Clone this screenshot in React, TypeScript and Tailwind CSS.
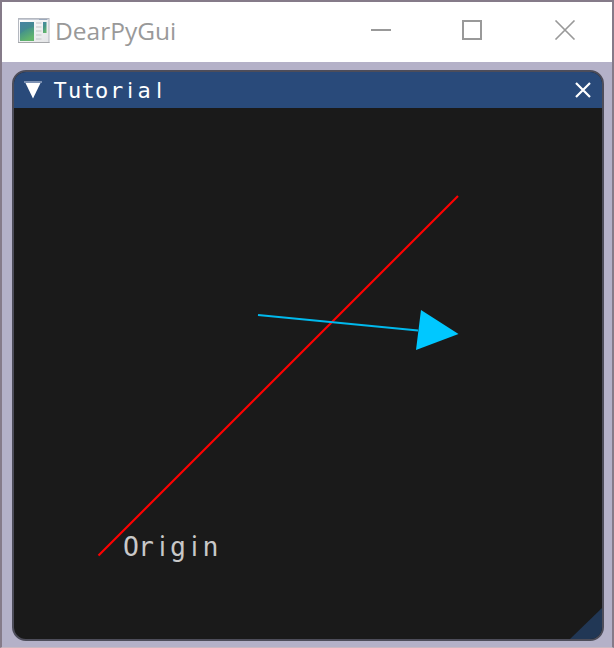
import React from "react";

function AppIcon() {
  return (
    <svg className="-mt-px h-[27px] w-[32px] shrink-0" viewBox="0 0 32 27">
      <defs>
        <linearGradient id="pane" x1="0" y1="0" x2="0.4" y2="1">
          <stop offset="0" stopColor="#4a88a5" />
          <stop offset="0.5" stopColor="#459489" />
          <stop offset="1" stopColor="#63b56c" />
        </linearGradient>
        <linearGradient id="face" x1="0" y1="0" x2="1" y2="1">
          <stop offset="0" stopColor="#ffffff" />
          <stop offset="1" stopColor="#e3e4e6" />
        </linearGradient>
      </defs>
      <rect x="0.5" y="0.5" width="30.500" height="24" fill="url(#face)" stroke="#b4b8c0" />
      <path d="M0 24.5H31.500" stroke="#a5a7aa" />
      <path d="M1 1.500H30" stroke="#c7cbd5" />
      <path d="M21 1.500H29" stroke="#9ca9bc" />
      <rect x="2" y="4" width="14" height="19" fill="url(#pane)" />
      <path d="M2 16Q7 10 16 9V4H2Z" fill="#4179a0" opacity="0.35" />
      <path d="M18 5H23.500M18 9H23.500M18 13H23.500M18 17H23.500M18 21H23.500" stroke="#d2d3d5" strokeWidth="1.5" />
      <rect x="25" y="4" width="3.500" height="11" fill="url(#pane)" />
    </svg>
  );
}

type Glyph = { c: string; x: number; plain?: boolean };

const titleGlyphs: Glyph[] = [
  { c: "T", x: 7 },
  { c: "u", x: 21.5 },
  { c: "t", x: 35 },
  { c: "o", x: 48.5 },
  { c: "r", x: 63.5 },
  { c: "i", x: 77, plain: true },
  { c: "a", x: 91 },
  { c: "l", x: 106, plain: true },
];

const originGlyphs: Glyph[] = [
  { c: "O", x: 131 },
  { c: "r", x: 146 },
  { c: "i", x: 162.5, plain: true },
  { c: "g", x: 178 },
  { c: "i", x: 194.5, plain: true },
  { c: "n", x: 210.5 },
];

function GridText({ glyphs, y, size, fill }: { glyphs: Glyph[]; y: number; size: number; fill: string }) {
  return (
    <text y={y} fontSize={size} fill={fill} textAnchor="middle">
      {glyphs.map((g) => (
        <tspan
          key={g.x}
          x={g.x}
          className={g.plain ? "font-['Noto_Sans',sans-serif]" : "font-['DejaVu_Sans_Mono',monospace]"}
        >
          {g.c}
        </tspan>
      ))}
    </text>
  );
}

export default function App() {
  return (
    <div className="flex h-[648px] w-[614px] flex-col overflow-hidden border-x-2 border-t-2 border-b border-[#857b89] border-b-[#cbb9c2] bg-[#b4b1c8]">
      <header className="flex h-[60px] shrink-0 items-center bg-white pr-[36px] pl-4">
        <AppIcon />
        <h1 className="-mt-px ml-[5px] flex-1 font-['Open_Sans','Noto_Sans',sans-serif] text-[24.5px] leading-none text-[#999999]">DearPyGui</h1>
        <svg className="-mt-1 h-[20px] w-[205px] shrink-0" viewBox="0 0 205 20" fill="none" stroke="#999999">
          <path d="M0 10H20" strokeWidth="2" />
          <rect x="92" y="1" width="18" height="18" strokeWidth="2" />
          <path d="M184.5 .5L203.500 19.5M203.500 .5L184.5 19.5" strokeWidth="1.6" />
        </svg>
      </header>
      <main className="flex flex-1 pt-2 pr-2 pb-[6px] pl-[10px]">
        <section className="flex w-[592px] flex-col overflow-hidden rounded-[14px] border-2 border-[#4d4d5a] bg-[#1a1a1a]">
          <div className="-mx-px -mt-px flex h-[37px] shrink-0 items-center bg-[#294a7a] pr-[12px] pl-[11px] text-white">
            <svg className="h-[18px] w-[18px]" viewBox="0 0 18 18">
              <path d="M0 0H18V2H0Z" fill="#7d91b2" />
              <path d="M1.500 2H16.500L9 17.500Z" fill="currentColor" />
            </svg>
            <svg className="ml-[11px] h-[36px] w-[120px]" viewBox="0 0 120 36">
              <GridText glyphs={titleGlyphs} y={25.5} size={22} fill="currentColor" />
            </svg>
            <svg className="ml-auto h-4 w-4" viewBox="0 0 16 16" stroke="currentColor" strokeWidth="2.200">
              <path d="M1 1L15 15M15 1L1 15" />
            </svg>
          </div>
          <svg className="h-[531px] w-[588px]" viewBox="14 108 588 531">
            <path d="M98.500 555.500L458 196" stroke="#ff0000" strokeWidth="2.1" />
            <path d="M258 315L418 330.500" stroke="#00b9ed" strokeWidth="2" />
            <path d="M458.500 334L421 310L416 350Z" fill="#00c8ff" />
            <GridText glyphs={originGlyphs} y={556} size={26.5} fill="#c8c8c8" />
            <path d="M602 608V639H570Z" fill="#213755" />
          </svg>
        </section>
      </main>
    </div>
  );
}
